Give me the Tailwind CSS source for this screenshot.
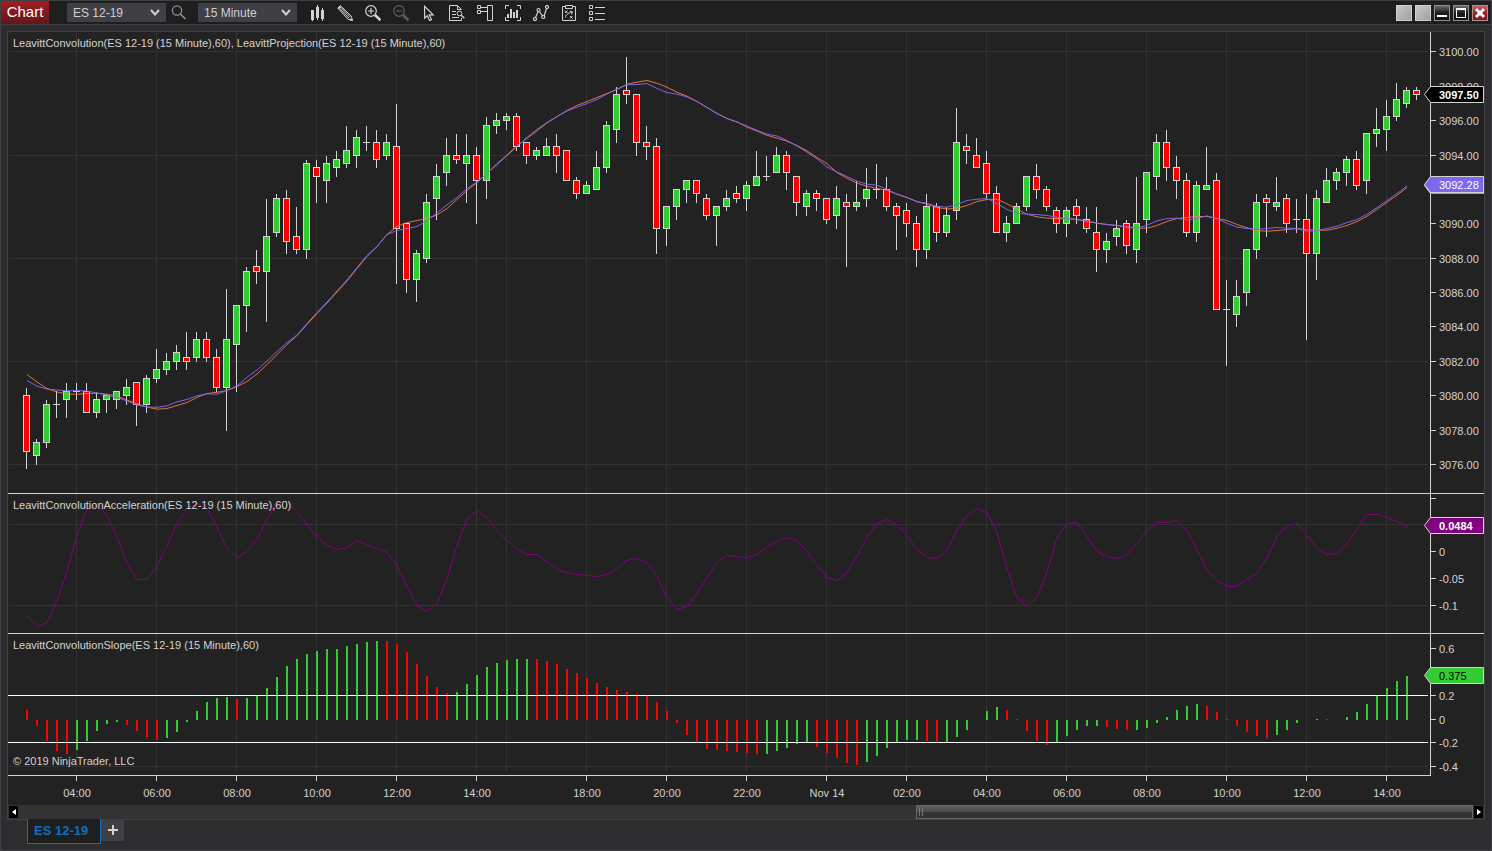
<!DOCTYPE html>
<html lang="en">
<head>
<meta charset="utf-8">
<meta name="viewport" content="width=device-width, initial-scale=1">
<title>Chart - ES 12-19</title>
<script src="https://cdn.jsdelivr.net/npm/@tailwindcss/browser@4"></script>
</head>
<body class="bg-[#2d2d30] font-['Liberation_Sans',Arial,sans-serif] text-[#d3d3d3]">
<div class="flex min-h-screen w-full flex-col border border-[#3f3f46]">

  <header class="flex h-6 items-center border-b border-[#3f3f46] bg-[#1e1e1e] pr-[3px]">
    <h1 class="flex h-[23px] w-12 items-center justify-center bg-linear-to-b from-[#a31d20] to-[#64151a] text-[15px] text-white">Chart</h1>
    <div class="relative ml-[18px] h-[19px] w-[99px]">
      <select aria-label="Instrument" class="block h-full w-full appearance-none bg-[#3f3f46] pl-[6px] text-xs text-[#cfcfcf]"><option>ES 12-19</option></select>
      <svg class="pointer-events-none absolute top-[6px] right-[6px]" width="10" height="8" viewBox="0 0 10 8" fill="none" stroke="#cfcfcf" stroke-width="2"><path d="M1 1l4 4.500L9 1"/></svg>
    </div>
    <button aria-label="Search instrument" class="ml-[5px] block size-4">
      <svg width="16" height="16" viewBox="0 0 16 16" fill="none" stroke="#909090"><circle cx="6" cy="5.5" r="4.6" stroke-width="1.3"/><path d="M9.300 9L14.500 14" stroke-width="1.700"/></svg>
    </button>
    <div class="relative ml-[11px] h-[19px] w-[99px]">
      <select aria-label="Interval" class="block h-full w-full appearance-none bg-[#3f3f46] pl-[6px] text-xs text-[#cfcfcf]"><option>15 Minute</option></select>
      <svg class="pointer-events-none absolute top-[6px] right-[6px]" width="10" height="8" viewBox="0 0 10 8" fill="none" stroke="#cfcfcf" stroke-width="2"><path d="M1 1l4 4.500L9 1"/></svg>
    </div>
    <nav aria-label="Chart tools" class="ml-[6px] flex">
      <button aria-label="Chart style" class="flex h-5 w-7 items-center justify-center"><svg width="16" height="16" viewBox="0 0 16 16" fill="#d3d3d3"><path d="M2 5h3v10H4v1H3v-1H2zM8 0h1v2h1v11H9v2H8v-2H7V2h1zM13 3h1v2h1v9h-1v2h-1v-2h-1V5h1z"/></svg></button>
      <button aria-label="Drawing tools" class="flex h-5 w-7 items-center justify-center"><svg width="16" height="16" viewBox="0 0 16 16" fill="none" stroke="#d3d3d3"><path d="M.8 3L3.300.7 14.200 11l1.300 4.400-4.600-1.200z"/><path d="M2.800 4.200L12 13M5 2.500L14 11M4 3.400l9 8.600" stroke-width=".9"/><path d="M1.500 3.500L3.800 1.500" stroke-width="2"/><path d="M13.500 13.800l2 1.600-2.600-.7z" fill="#d3d3d3"/></svg></button>
      <button aria-label="Zoom in" class="flex h-5 w-7 items-center justify-center"><svg width="16" height="16" viewBox="0 0 16 16" fill="none" stroke="#d3d3d3"><circle cx="6" cy="6" r="5.300" stroke-width="1.200"/><path d="M3 6h6M6 3v6" stroke-width="1.200"/><path d="M10 10l5.500 5.300" stroke-width="2.600"/></svg></button>
      <button aria-label="Zoom out" disabled class="flex h-5 w-7 items-center justify-center"><svg width="16" height="16" viewBox="0 0 16 16" fill="none" stroke="#5c5c5c"><circle cx="6" cy="6" r="5.300" stroke-width="1.200"/><path d="M3 6h6" stroke-width="1.200"/><path d="M10 10l5.500 5.300" stroke-width="2.600"/></svg></button>
      <button aria-label="Pointer" class="flex h-5 w-7 items-center justify-center"><svg width="16" height="16" viewBox="0 0 16 16" fill="none" stroke="#d3d3d3" stroke-width="1.200"><path d="M3.600 1.300v11.900l2.700-2.500 2.200 4.800 2-.9-2.200-4.700h3.900z"/></svg></button>
      <button aria-label="Data box" class="flex h-5 w-7 items-center justify-center"><svg width="16" height="16" viewBox="0 0 16 16" fill="none" stroke="#d3d3d3"><path d="M12.500 13v2.500H.5V.5h8l4 4"/><path d="M8.500.5v4h4M3 6.500h4M3 9.500h4M3 12.500h7"/><circle cx="10.500" cy="8.500" r="2.300"/><path d="M12.300 10.300l3 3" stroke-width="1.600"/></svg></button>
      <button aria-label="Chart trader" class="flex h-5 w-7 items-center justify-center"><svg width="16" height="16" viewBox="0 0 16 16" fill="none" stroke="#d3d3d3"><path d="M10.500.5h5v15h-5zM.5.500h3v3h-3zM.5 5.500h3v3h-3zM3.500 2.500h7M3.500 6.500h7"/></svg></button>
      <button aria-label="Strategies" class="flex h-5 w-7 items-center justify-center"><svg width="16" height="16" viewBox="0 0 16 16" fill="none" stroke="#d3d3d3"><path d="M.5 4V.5H4M12 .5h3.500V4M15.500 12v3.500H12M4 15.500H.5V12"/><path d="M3 9v4M6 4v9M9 7v6M12 5v8" stroke-width="2"/></svg></button>
      <button aria-label="Indicators" class="flex h-5 w-7 items-center justify-center"><svg width="16" height="16" viewBox="0 0 16 16" fill="none" stroke="#d3d3d3" stroke-width="1.200"><path d="M2.500 12.500l2.700-6M6.500 6.500l3 4.500M11 11l2.700-8"/><circle cx="2" cy="14" r="1.500"/><circle cx="5.500" cy="5" r="1.500"/><circle cx="10.300" cy="12" r="1.500"/><circle cx="14" cy="2" r="1.500"/></svg></button>
      <button aria-label="Strategy manager" class="flex h-5 w-7 items-center justify-center"><svg width="16" height="16" viewBox="0 0 16 16" fill="none" stroke="#d3d3d3"><path d="M4 1.500H1.500v14h13v-14H12M4.500.5h7v3h-7z"/><path d="M4 5.500l2.500 2.500M6.500 5.500L4 8M9 11l2.500 2.500M11.500 11L9 13.500M4.500 12.500c.5-3 2-4 6.500-5.500M8.800 6l2.700.8-1 2.600"/></svg></button>
      <button aria-label="Properties" class="flex h-5 w-7 items-center justify-center"><svg width="16" height="16" viewBox="0 0 16 16" fill="none" stroke="#d3d3d3"><path d="M.5.500h3v3h-3zM.5 6.500h3v3h-3zM.5 12.500h3v3h-3zM6 2.500h10M6 8.500h10M6 14.500h10"/></svg></button>
    </nav>
    <div class="ml-auto flex gap-[3px]">
      <button aria-label="Link instrument" class="size-4 border border-[#d0d0d0] bg-linear-to-br from-[#c8c8c8] to-[#a0a0a0]"></button>
      <button aria-label="Link interval" class="size-4 border border-[#d0d0d0] bg-linear-to-br from-[#c8c8c8] to-[#a0a0a0]"></button>
      <button aria-label="Minimize" class="size-4 border border-[#909090] bg-linear-to-b from-[#6a6a6a] via-[#1c1c1c] to-[#111111]"><svg width="14" height="14" viewBox="0 0 14 14"><path d="M2 9h10v2H2z" fill="#fff"/></svg></button>
      <button aria-label="Maximize" class="size-4 border border-[#909090] bg-linear-to-b from-[#6a6a6a] via-[#1c1c1c] to-[#111111]"><svg width="14" height="14" viewBox="0 0 14 14"><path d="M2 2h10v10H2zM3 4v7h8V4z" fill="#fff" fill-rule="evenodd"/></svg></button>
      <button aria-label="Close" class="size-4 border border-[#b09090] bg-linear-to-b from-[#c0606a] via-[#a41c20] to-[#8a1418]"><svg width="14" height="14" viewBox="0 0 14 14"><path d="M3 3l8 8M11 3l-8 8" stroke="#fff" stroke-width="3"/></svg></button>
    </div>
  </header>

  <main class="mx-[6px] mt-[6px] border border-[#3f3f46] bg-[#222222]">
    <svg id="chart" class="block h-auto w-full" viewBox="8 32 1476 773" role="img" aria-label="ES 12-19 15 minute candlestick chart" font-size="11" fill="#d3d3d3">
      <g id="grid" fill="#323232"></g>
      <g id="candles"></g>
      <g fill="none" stroke-width="1">
        <polyline id="projection" stroke="#ff7f50" stroke-opacity=".85"/>
        <polyline id="convolution" stroke="#7b68ee" stroke-opacity=".95"/>
        <polyline id="acceleration" stroke="#800080"/>
      </g>
      <g id="slope"></g>
      <g fill="#ffffff"><rect x="8" y="695" width="1420" height="1"/><rect x="8" y="742" width="1420" height="1"/></g>
      <g>
        <rect x="8" y="493" width="1476" height="1"/><rect x="8" y="633" width="1476" height="1"/>
        <rect x="8" y="775" width="1423" height="1"/><rect x="1430" y="32" width="1" height="744"/>
      </g>
      <g id="axis"></g>
      <g id="tags"></g>
      <text x="13" y="47">LeavittConvolution(ES 12-19 (15 Minute),60), LeavittProjection(ES 12-19 (15 Minute),60)</text>
      <text x="13" y="509">LeavittConvolutionAcceleration(ES 12-19 (15 Minute),60)</text>
      <text x="13" y="649">LeavittConvolutionSlope(ES 12-19 (15 Minute),60)</text>
      <text x="13" y="765">© 2019 NinjaTrader, LLC</text>
    </svg>
    <div class="flex h-[14px] bg-[#333333] px-px">
      <button aria-label="Scroll left" class="my-px flex w-[9px] items-center justify-center bg-black"><svg width="4" height="6" viewBox="0 0 4 6"><path d="M4 0v6L0 3z" fill="#fff"/></svg></button>
      <div class="grid flex-1 grid-cols-[898fr_557fr]">
        <div class="col-start-2 flex items-center gap-[2px] border border-[#686868] bg-linear-to-b from-[#606060] from-0% via-[#4a4a4a] via-50% to-[#333333] to-50% pl-[2px]">
          <span class="h-2 w-px bg-[#777777]"></span><span class="h-2 w-px bg-[#777777]"></span>
        </div>
      </div>
      <button aria-label="Scroll right" class="my-px ml-px flex w-[9px] items-center justify-center bg-black"><svg width="4" height="6" viewBox="0 0 4 6"><path d="M0 0v6l4-3z" fill="#fff"/></svg></button>
    </div>
  </main>

  <footer class="-mt-px flex items-start pl-[26px]">
    <a href="#chart" class="relative flex h-[25px] w-[74px] items-center border border-t-0 border-[#0e70c0] bg-[#1e1e1e] pb-px pl-[6px] text-[13px] font-bold text-[#0e70c0]">ES 12-19</a>
    <button aria-label="Add tab" class="relative flex h-[22px] w-[23px] items-center justify-center bg-[#3f3f46]"><svg width="10" height="10" viewBox="0 0 10 10"><path d="M4 0h2v4h4v2H6v4H4V6H0V4h4z" fill="#d3d3d3"/></svg></button>
  </footer>
</div>

<script>
// Candles, one per 15 minutes: colour (G up, R down, D unchanged), high, body top, body bottom, low.
const candles = `R388,395,452,469 G439,442,456,465 G400,404,443,448 D391,404,405,418 G383,391,400,418 D383,391,392,400 R383,391,413,413 G392,399,413,418 G395,395,400,413 G391,391,400,409
G379,387,396,405 R382,382,405,426 G375,378,405,413 G349,369,379,383 G353,361,370,375 G345,352,362,370 R332,357,362,370 G332,339,358,362 R332,339,358,362 R349,357,388,392
G289,339,388,431 G305,305,345,392 G267,271,306,332 R250,266,272,284 G199,236,272,322 G194,198,233,237 R190,198,242,254 R207,236,250,254 G160,163,250,259 R160,167,177,203
G156,163,181,203 G151,159,168,177 G126,150,164,168 G130,137,156,168 D126,142,143,151 R130,142,160,168 G134,142,156,160 R104,146,229,284 R223,223,280,293 G250,253,280,302
G194,202,259,263 G164,176,199,220 G138,155,173,186 R134,155,160,164 G134,155,164,203 R147,155,181,224 G117,125,181,199 G113,120,126,134 G113,116,121,130 R113,116,147,151
R142,142,156,164 G147,150,156,160 G138,146,156,156 R134,146,156,173 R150,150,181,181 R177,180,194,199 G181,185,194,194 G151,167,190,190 G121,125,168,173 G87,94,130,143
R57,90,95,104 R94,94,143,156 R126,142,147,160 R138,146,229,254 G206,206,229,246 G189,189,207,220 G180,180,190,203 R180,180,194,203 R194,198,216,220 G206,206,216,246
G190,198,207,211 R186,193,199,203 G181,185,199,211 G151,176,186,186 D156,176,177,181 G147,155,173,173 R151,155,173,190 R176,176,203,216 G190,193,207,216 R190,193,199,211
R198,198,220,224 G186,198,216,229 R194,202,207,267 G181,202,207,211 G168,189,199,207 D164,189,190,199 R177,189,207,211 R203,206,216,250 R203,210,224,237 R216,223,250,267
G194,206,250,259 R203,206,233,242 G207,215,233,237 G108,142,211,220 R134,146,151,164 R138,155,168,168 R151,163,194,199 R186,193,233,233 G216,223,233,242 G203,206,224,224
G176,176,207,211 R164,176,190,199 R186,189,207,211 R207,210,224,233 G207,210,224,237 R199,206,216,224 R207,219,229,233 R207,232,250,272 G233,241,250,263 G220,228,237,246
R220,223,246,254 G177,223,250,263 G172,172,220,233 G134,142,177,190 R130,142,168,181 R156,167,181,199 R173,180,233,237 G181,185,233,242 G147,185,190,190 R173,180,310,310
D280,309,310,366 G280,296,315,327 G249,249,293,306 G194,202,250,259 R194,198,203,237 G177,202,207,211 R194,198,224,233 D199,219,220,233 R194,219,254,340 G190,198,254,280
G168,180,203,203 G168,172,181,190 G156,159,173,186 R151,159,186,190 G133,133,181,194 G108,129,134,147 G100,116,130,151 G83,99,117,121 G87,90,104,108 R87,90,95,100`;

const projection = [374,381.5,388,391.5,393.5,393.8,393,392.7,393.7,395.7,399.5,403.5,406.5,408.7,408,405,402,397,393,391.8,
390,386,381,373.5,364,354,344,335,324,313,302.5,291.5,280.5,268,256,246,234,226,222,220,
218,214.5,208,199,190,182,173,164,155,146,137,129,122,116,110,105,101,97,93,89,
83.7,81.7,80,82.7,86.7,91.7,95.7,101,107,113,118,121.5,126.5,130.7,134.7,137.7,140.7,145,150.3,157,
163.3,172,177.7,182.7,185.7,188,189.7,193.7,197,201,203.7,207,208.5,207.7,205,201,199,198.7,203.3,208.7,
213.7,216.3,217.7,218,218.3,218.7,221,222.7,224,225,226.7,227.7,227.7,225,221,218,217,216,216,218,
220,224,227.3,230,230.7,230,229,228,229.3,229.7,229.7,227.7,225,221,215.7,208.7,201.7,194.7,187];

const convolution = [380,385.7,388.6,389.5,390.3,390,390.5,392.5,394.5,397,400.5,404.5,406.5,406.8,405.3,401.3,399,395.3,393.3,393.7,
390,385.3,376.7,369.5,360.5,351,342,334.5,323,312,301.5,290.5,279.5,267,255,246,234,230,228,226,
220,212.5,204.3,197,188,181.5,173,163,154.5,145,138,130.5,122.5,116,110.5,106.7,103,99,93.5,88.5,
84.3,84,83,88,92,93.7,96.5,101,107,113,118,121.5,125.7,129.7,133.7,135.5,140,145.5,151.7,158.3,
166.5,171.5,176,180.7,183.7,184.7,188.7,193.7,197,201.3,202.7,206,206.7,204,200,198.7,198,203,209,212.7,
213.7,214,215,216.7,218,219.3,220.3,222.7,224,225,226.3,227.7,224.7,220.3,218,217.7,219.5,218,215.3,218.3,
222.7,226.7,228,228.7,228,227,227.7,228,230.7,230.3,228,225.7,222,219,213.7,207,200,193,185.5];

const acceleration = [615,626,622,600,571,535,509,504,515,537,562,579,579,566,545,523,508,503,508,527,
548,557,551,539,519,502,501,511,524,537,545,549,547,540,544,548,552,565,586,605,
611,603,578,545,518,510,517,530,540,549,554,554,561,569,572,574,575,576,574,568,
560,558,562,576,597,609,606,593,577,562,555,556,557,554,546,541,537,540,551,565,
577,580,572,556,537,523,519,524,535,549,557,558,550,530,515,508,512,532,568,597,
606,597,572,537,523,522,536,551,556,558,554,543,530,522,522,520,530,549,569,580,
586,586,579,573,557,536,525,523,535,548,554,553,543,529,514,514,517,521,526];

// Slope bars: colour and end position; the base line is y = 720.
const slope = `R710 R726 R741 R751 R754 G750 G741 G731 G724 G722 R725 R731 R737 R740 G738 G732 G722 G711 G702 G698
G697 R699 G698 G695 G688 G677 G666 G659 G654 G651 G649 G649 G646 G644 G642 G641 R641 R644 R652 R664
R676 R687 R693 G692 G684 G675 G667 G663 G660 G659 G659 R659 R661 R664 R669 R673 R678 R683 R687 R690
R692 R694 R696 R702 R711 R723 R735 R742 R749 R750 R751 R752 R753 R754 G754 G751 G748 G744 G743 R747
R753 R758 R763 R765 G762 G756 G748 G742 G740 G740 R741 R742 G742 G737 G730 G720 G711 G707 R710 R719
R731 R741 R745 G742 G736 G730 G726 G726 R727 R729 R730 G730 G728 G723 G717 G710 G706 G704 R706 R712
R719 R726 R732 R736 R738 G735 G730 G723 G720 G719 R719 G720 G717 G712 G704 G696 G688 G681 G676`;

const fills = { G: '#32cd32', R: '#ff0000', D: '#d3d3d3' };
const box = (x, y, w, h, fill) => `<rect x="${x}" y="${y}" width="${w}" height="${h}"${fill ? ` fill="${fill}"` : ''}/>`;
const put = (id, html) => { document.getElementById(id).innerHTML = html; };
const trace = (id, ys) => document.getElementById(id).setAttribute('points', ys.map((y, i) => `${27 + 10 * i},${y + 0.5}`).join(' '));

put('candles', candles.split(/\s+/).map((c, i) => {
  const x = 23 + 10 * i;
  const [hi, top, bot, lo] = c.slice(1).split(',').map(Number);
  const inner = c[0] === 'D' ? '' : box(x + 1, top + 1, 5, bot - top - 2, fills[c[0]]);
  return box(x + 3, hi, 1, lo - hi) + box(x, top, 7, bot - top) + inner;
}).join(''));

put('slope', slope.split(/\s+/).map((b, i) => {
  const y = +b.slice(1);
  return box(26 + 10 * i, Math.min(y, 720), 2, Math.abs(y - 720), fills[b[0]]);
}).join(''));

trace('projection', projection);
trace('convolution', convolution);
trace('acceleration', acceleration);

const times = [[76,'04:00'],[156,'06:00'],[236,'08:00'],[316,'10:00'],[396,'12:00'],[476,'14:00'],[586,'18:00'],[666,'20:00'],[746,'22:00'],
  [826,'Nov 14'],[906,'02:00'],[986,'04:00'],[1066,'06:00'],[1146,'08:00'],[1226,'10:00'],[1306,'12:00'],[1386,'14:00']];
const levels = [[51,'3100.00'],[86,'3098.00'],[120,'3096.00'],[155,'3094.00'],[223,'3090.00'],[258,'3088.00'],[292,'3086.00'],[326,'3084.00'],
  [361,'3082.00'],[395,'3080.00'],[430,'3078.00'],[464,'3076.00'],[498,''],[551,'0'],[578,'-0.05'],[605,'-0.1'],
  [648,'0.6'],[695,'0.2'],[719,'0'],[742,'-0.2'],[766,'-0.4']];

put('grid', [...times.map(t => t[0]), 506].map(x => box(x, 32, 1, 740)).join('') +
  [51,155,258,361,464,524,605,766].map(y => box(9, y, 1418, 1)).join(''));
put('axis', times.map(([x, t]) => box(x, 776, 1, 5) + `<text x="${x + 1}" y="797" text-anchor="middle">${t}</text>`).join('') +
  levels.map(([y, t]) => box(1431, y, 5, 1) + `<text x="1439" y="${y + 5}">${t}</text>`).join(''));

const tag = (y, fill, ink, label, weight = 400) =>
  `<path d="M1424.500 ${y}.5l6-8h53v16h-53z" fill="${fill}" stroke="#d3d3d3"/><text x="1439" y="${y + 5}" fill="${ink}" font-weight="${weight}">${label}</text>`;
put('tags', tag(94, '#000000', '#ffffff', '3097.50', 700) + tag(185, '#ff7f50', '#ffffff', '') +
  box(1430, 193, 53, 1, '#ff7f50') + tag(184, '#7b68ee', '#ffffff', '3092.28') +
  tag(525, '#800080', '#ffffff', '0.0484', 700) + tag(675, '#32cd32', '#000000', '0.375'));
</script>
</body>
</html>
